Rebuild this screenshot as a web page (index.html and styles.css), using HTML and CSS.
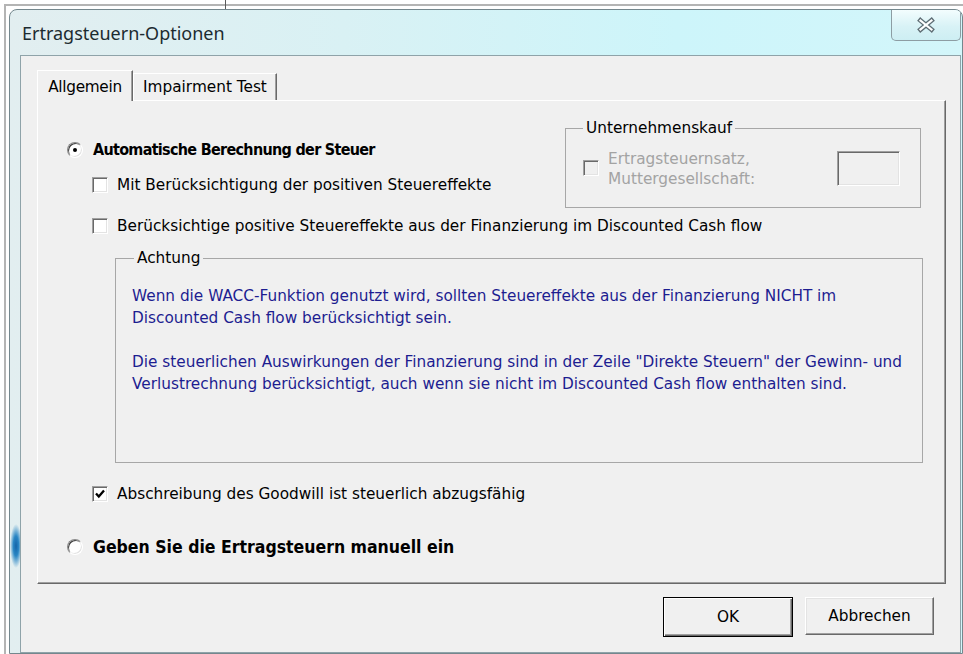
FILE: index.html
```html
<!DOCTYPE html>
<html lang="de">
<head>
<meta charset="utf-8">
<title>Ertragsteuern-Optionen</title>
<link rel="stylesheet" href="styles.css">
</head>
<body>
<div class="window">
  <div class="titlebar">
    <span class="title">Ertragsteuern-Optionen</span>
    <button class="close" type="button" aria-label="Schließen">
      <svg width="20" height="16" viewBox="0 0 20 16" aria-hidden="true">
        <path d="M4.5 3.5 L15.5 12.5 M15.5 3.5 L4.5 12.5" stroke="#5f6e75" stroke-width="4.8" stroke-linecap="square" fill="none"/>
        <path d="M4.5 3.5 L15.5 12.5 M15.5 3.5 L4.5 12.5" stroke="#ffffff" stroke-width="2.2" stroke-linecap="square" fill="none"/>
      </svg>
    </button>
  </div>

  <div class="client">
    <div class="tabs">
      <div class="tab active">Allgemein</div>
      <div class="tab">Impairment Test</div>
    </div>

    <div class="panel">
      <div class="top">
        <div class="opts">
          <label class="radio strong"><span class="rb on"></span>Automatische Berechnung der Steuer</label>
          <label class="check first"><span class="cb"></span>Mit Berücksichtigung der positiven Steuereffekte</label>
        </div>
        <fieldset class="group buy">
          <legend>Unternehmenskauf</legend>
          <div class="buy-row">
            <span class="cb off"></span>
            <span class="muted">Ertragsteuernsatz,<br>Muttergesellschaft:</span>
            <span class="field"></span>
          </div>
        </fieldset>
      </div>

      <label class="check second"><span class="cb"></span>Berücksichtige positive Steuereffekte aus der Finanzierung im Discounted Cash flow</label>

      <fieldset class="group note">
        <legend>Achtung</legend>
        <p>Wenn die WACC-Funktion genutzt wird, sollten Steuereffekte aus der Finanzierung NICHT im<br>Discounted Cash flow berücksichtigt sein.</p>
        <p>Die steuerlichen Auswirkungen der Finanzierung sind in der Zeile "Direkte Steuern" der Gewinn- und<br>Verlustrechnung berücksichtigt, auch wenn sie nicht im Discounted Cash flow enthalten sind.</p>
      </fieldset>

      <label class="check third"><span class="cb">
        <svg width="14" height="14" viewBox="0 0 14 14" aria-hidden="true"><path d="M3 6.5 L5.8 9.5 L11 3.5" stroke="#000" stroke-width="2.3" fill="none"/></svg>
      </span>Abschreibung des Goodwill ist steuerlich abzugsfähig</label>

      <label class="radio strong large last"><span class="rb"></span>Geben Sie die Ertragsteuern manuell ein</label>
    </div>

    <div class="actions">
      <button class="btn default" type="button">OK</button>
      <button class="btn" type="button">Abbrechen</button>
    </div>
  </div>
</div>
</body>
</html>
```

FILE: styles.css
```css
/* Desktop behind the dialog: a faint grey frame edge and a cell line */
body {
  margin: 0;
  width: 963px;
  height: 654px;
  overflow: hidden;
  background:
    linear-gradient(#5a5a5a, #5a5a5a) no-repeat 225px 0 / 1px 9px,
    linear-gradient(#b4b4b4, #b4b4b4) no-repeat 4px 4px / 2px 100%,
    linear-gradient(#b4b4b4, #b4b4b4) no-repeat 4px 4px / 100% 2px,
    #ffffff;
  font-family: "DejaVu Sans", Tahoma, sans-serif;
  font-size: 15.3px;
  color: #000;
}

/* Window frame (Aero basic look) */
.window {
  box-sizing: border-box;
  margin: 9px 0 0 9px;
  width: 954px;
  height: 645px;
  border: 1px solid #74878d;
  border-radius: 8px 8px 0 0;
  display: flex;
  flex-direction: column;
  overflow: hidden;
  background:
    radial-gradient(6px 22px at 6px 536px, #1464a8 0%, #2a86c4 45%, rgba(120, 210, 240, 0) 100%),
    linear-gradient(90deg, #e2eef0 0%, #d9f1f4 35%, #cdf5fa 70%, #d3f6fa 100%);
}

.titlebar {
  height: 45px;
  flex: none;
  display: flex;
  align-items: flex-start;
  padding-left: 12px;
}

.title {
  margin-top: 11px;
  font-family: "Noto Sans", "Open Sans", sans-serif;
  font-size: 18px;
  line-height: 24px;
  color: #1c2b30;
}

.close {
  margin-left: auto;
  margin-right: 1px;
  width: 70px;
  height: 31px;
  padding: 0;
  border: 1px solid #8d9da3;
  border-top: none;
  border-radius: 0 0 5px 5px;
  background: linear-gradient(#f3fdfe, #d8f2f6 55%, #cdeef3);
  display: flex;
  align-items: center;
  justify-content: center;
}

/* Dialog client area */
.client {
  flex: 1;
  margin: 0 1px 0 10px;
  border: 1px solid #8fa3a9;
  background: #f0f0f0;
  padding: 14px 0 0 16px;
}

.tabs {
  display: flex;
  align-items: flex-end;
  height: 30px;
}

.tab {
  box-sizing: border-box;
  height: 27px;
  width: 144px;
  padding-top: 3px;
  line-height: 20px;
  text-align: center;
  white-space: nowrap;
  border-top: 1px solid #fff;
  border-left: 1px solid #fff;
  border-right: 1px solid #696969;
  box-shadow: inset -1px 0 0 #a0a0a0;
  background: #f0f0f0;
}

.tab.active {
  width: 96px;
  height: 31px;
  padding-top: 6px;
  margin-bottom: -1px;
  position: relative;
  z-index: 1;
  letter-spacing: -0.3px;
}

.panel {
  box-sizing: border-box;
  width: 909px;
  height: 484px;
  border: 1px solid;
  border-color: #fff #696969 #696969 #fff;
  box-shadow: inset -1px -1px 0 #a0a0a0;
  background: #f0f0f0;
}

.top {
  display: flex;
  height: 107px;
}

.opts {
  padding-top: 39px;
}

/* Option rows */
.radio,
.check {
  display: flex;
  align-items: center;
  height: 20px;
  line-height: 20px;
  white-space: nowrap;
}

.radio { margin-left: 29px; }
.check { margin-left: 54px; }

.strong {
  font-family: "DejaVu Sans Condensed", "DejaVu Sans", sans-serif;
  font-size: 16px;
  letter-spacing: -0.7px;
  font-weight: bold;
}

.strong.large {
  font-size: 17.5px;
  letter-spacing: 0;
}

.check.first  { margin-top: 15px; }
.check.second { margin-top: 8px; }
.check.third  { margin-top: 21px; }
.radio.last   { margin-top: 33px; }

.rb {
  box-sizing: border-box;
  flex: none;
  width: 16px;
  height: 16px;
  margin-right: 10px;
  border-radius: 50%;
  border: 1px solid;
  border-color: #8a8a8a #ffffff #ffffff #8a8a8a;
  box-shadow: inset 1px 1px 0 #404040, inset -1px -1px 0 #e3e3e3;
  background: #fff;
  position: relative;
}

.rb.on::after {
  content: "";
  position: absolute;
  left: 5px;
  top: 5px;
  width: 4px;
  height: 4px;
  border-radius: 50%;
  background: #000;
}

.cb {
  box-sizing: border-box;
  flex: none;
  width: 16px;
  height: 16px;
  margin-right: 9px;
  border: 1px solid;
  border-color: #a0a0a0 #ffffff #ffffff #a0a0a0;
  box-shadow: inset 1px 1px 0 #696969, inset -1px -1px 0 #e3e3e3;
  background: #fff;
  display: flex;
  align-items: center;
  justify-content: center;
}

.cb.off { background: #f0f0f0; }

/* Group boxes */
.group {
  box-sizing: border-box;
  margin: 0;
  min-inline-size: 0;
  border: 1px solid #a7a7a7;
}

.group legend {
  padding: 0 3px;
  line-height: 18px;
  white-space: nowrap;
}

.buy {
  width: 356px;
  height: 89px;
  margin: 18px 24px 0 auto;
  padding: 12px 0 0 17px;
}

.buy-row {
  display: flex;
  align-items: flex-start;
}

.buy-row .cb { margin-top: 11px; margin-right: 9px; }

.muted {
  color: #a3a3a3;
  line-height: 20px;
  white-space: nowrap;
}

.field {
  box-sizing: border-box;
  flex: none;
  width: 63px;
  height: 35px;
  margin: 2px 20px 0 auto;
  border: 1px solid;
  border-color: #a0a0a0 #ffffff #ffffff #a0a0a0;
  box-shadow: inset 1px 1px 0 #696969, inset -1px -1px 0 #e3e3e3;
  background: #f0f0f0;
}

.note {
  width: 808px;
  height: 214px;
  margin: 13px 0 0 77px;
  padding: 18px 0 0 16px;
}

.note legend { margin-left: 2px; }

.note p {
  margin: 0 0 22px;
  line-height: 22px;
  color: #1d1d90;
  white-space: nowrap;
}

/* Dialog buttons */
.actions {
  display: flex;
  justify-content: flex-end;
  align-items: flex-start;
  width: 909px;
  box-sizing: border-box;
  padding-right: 12px;
  margin-top: 13px;
}

.btn {
  box-sizing: border-box;
  width: 129px;
  height: 38px;
  margin-left: 12px;
  padding: 0;
  font: inherit;
  color: #000;
  background: #f0f0f0;
  border: 1px solid;
  border-color: #fff #696969 #696969 #fff;
  box-shadow: inset -1px -1px 0 #a0a0a0, inset 1px 1px 0 #e3e3e3;
}

.btn.default {
  width: 130px;
  height: 40px;
  margin-left: 0;
  border: 1px solid #000;
  box-shadow: inset 1px 1px 0 #fff, inset -1px -1px 0 #696969, inset -2px -2px 0 #a0a0a0;
}
```
